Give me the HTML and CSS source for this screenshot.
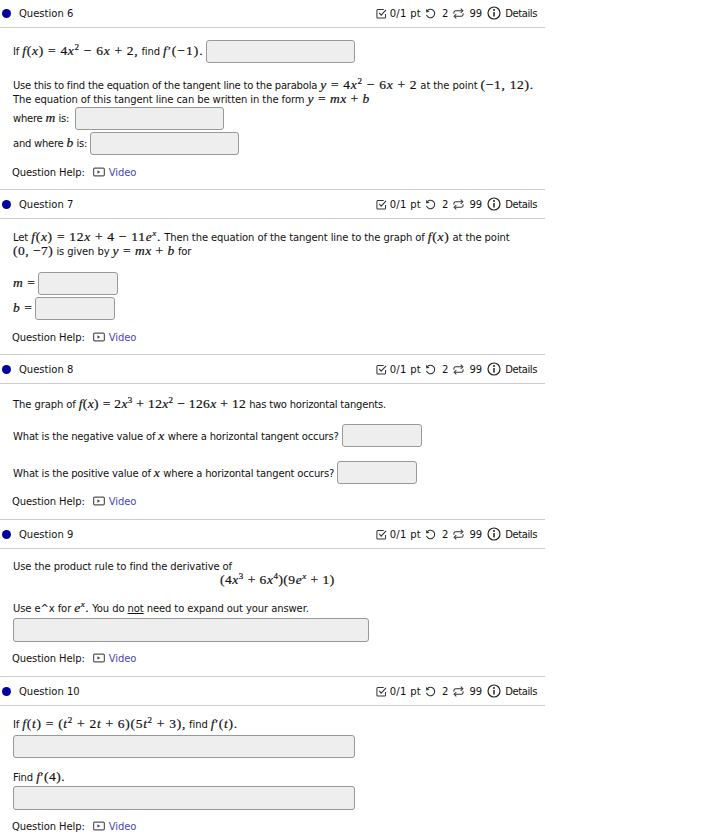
FILE: index.html
```html
<!DOCTYPE html>
<html lang="en">
  <head>
    <meta charset="utf-8" />
    <title>Assignment</title>
    <link rel="stylesheet" href="styles.css">
  </head>

  <body>
    <svg class="defs" width="0" height="0" aria-hidden="true">
      <symbol id="i-check" viewBox="0 0 12 12">
        <path d="M10.4 6.5V10a1 1 0 0 1-1 1H2a1 1 0 0 1-1-1V2.6a1 1 0 0 1 1-1h6.4" fill="none" stroke="#333" stroke-width="1.1"/>
        <path d="M3.5 5.4 5.6 7.8 11 2" fill="none" stroke="#333" stroke-width="1.2"/>
      </symbol>
      <symbol id="i-undo" viewBox="0 0 12 12">
        <path d="M2.6 2.8A4.6 4.6 0 1 1 1.6 7.5" fill="none" stroke="#333" stroke-width="1.2"/>
        <path d="M1 1.2 1.4 4.8 5 4.2Z" fill="#333"/>
      </symbol>
      <symbol id="i-retry" viewBox="0 0 12 12">
        <path d="M1 6.2V5a2 2 0 0 1 2-2h7M11 5.8V7a2 2 0 0 1-2 2H2" fill="none" stroke="#333" stroke-width="1.1"/>
        <path d="M8.4 .8 10.8 3 8.4 5.2M3.6 6.8 1.2 9 3.6 11.2" fill="none" stroke="#333" stroke-width="1.1"/>
      </symbol>
      <symbol id="i-info" viewBox="0 0 14 14">
        <circle cx="7" cy="7" r="6" fill="none" stroke="#222" stroke-width="1.2"/>
        <path d="M7 6v4.4" stroke="#222" stroke-width="1.5"/>
        <circle cx="7" cy="3.9" r="1" fill="#222"/>
      </symbol>
      <symbol id="i-video" viewBox="0 0 13 10">
        <rect x=".7" y=".7" width="11.6" height="8.6" rx="1.2" fill="none" stroke="#555" stroke-width="1.3"/>
        <path d="M4.8 3v4l3-2Z" fill="#444"/>
      </symbol>
    </svg>

    <main class="questions">

      <section class="question">
        <header class="q-head">
          <span class="q-dot"></span>
          <span class="q-name">Question 6</span>
          <div class="q-meta">
            <svg class="ic"><use href="#i-check"/></svg><span class="pts">0/1 pt</span>
            <svg class="ic"><use href="#i-undo"/></svg><span class="num">2</span>
            <svg class="ic"><use href="#i-retry"/></svg><span class="num">99</span>
            <svg class="ic-info"><use href="#i-info"/></svg><span class="details">Details</span>
          </div>
        </header>
        <div class="q-body q6">
          <div class="row"><span>If <span class="m loose"><i>f</i>(<i>x</i>) = 4<i>x</i><sup>2</sup> − 6<i>x</i> + 2,</span> find <span class="m looser"><i>f</i>′(−1).</span> </span><span class="box w149 q6-first"></span></div>
          <p class="para"><span class="narrow">Use this to find the equation of the tangent line to the parabola</span> <span class="m loose"><i>y</i> = 4<i>x</i><sup>2</sup> − 6<i>x</i> + 2</span> at the point <span class="m loose">(−1, 12).</span><br>
          The equation of this tangent line can be written in the form <span class="m"><i>y</i> = <i>mx</i> + <i>b</i></span></p>
          <div class="row tight"><span>where <span class="m"><i>m</i></span> is: </span><span class="box w149 q6-m"></span></div>
          <div class="row tight"><span>and where <span class="m"><i>b</i></span> is: </span><span class="box w149"></span></div>
          <p class="help">Question Help: <a class="video"><svg class="ic-video"><use href="#i-video"/></svg>Video</a></p>
        </div>
      </section>

      <section class="question">
        <header class="q-head">
          <span class="q-dot"></span>
          <span class="q-name">Question 7</span>
          <div class="q-meta">
            <svg class="ic"><use href="#i-check"/></svg><span class="pts">0/1 pt</span>
            <svg class="ic"><use href="#i-undo"/></svg><span class="num">2</span>
            <svg class="ic"><use href="#i-retry"/></svg><span class="num">99</span>
            <svg class="ic-info"><use href="#i-info"/></svg><span class="details">Details</span>
          </div>
        </header>
        <div class="q-body q7">
          <p class="para">Let <span class="m loose"><i>f</i>(<i>x</i>) = 12<i>x</i> + 4 − 11<i>e</i><sup><i>x</i></sup>.</span> Then the equation of the tangent line to the graph of <span class="m loose"><i>f</i>(<i>x</i>)</span> at the point<br>
          <span class="m">(0, −7)</span> is given by <span class="m"><i>y</i> = <i>mx</i> + <i>b</i></span> for</p>
          <div class="row first"><span><span class="m"><i>m</i> =</span></span><span class="box w80"></span></div>
          <div class="row tight"><span><span class="m"><i>b</i> =</span></span><span class="box w80"></span></div>
          <p class="help">Question Help: <a class="video"><svg class="ic-video"><use href="#i-video"/></svg>Video</a></p>
        </div>
      </section>

      <section class="question">
        <header class="q-head">
          <span class="q-dot"></span>
          <span class="q-name">Question 8</span>
          <div class="q-meta">
            <svg class="ic"><use href="#i-check"/></svg><span class="pts">0/1 pt</span>
            <svg class="ic"><use href="#i-undo"/></svg><span class="num">2</span>
            <svg class="ic"><use href="#i-retry"/></svg><span class="num">99</span>
            <svg class="ic-info"><use href="#i-info"/></svg><span class="details">Details</span>
          </div>
        </header>
        <div class="q-body q8">
          <p class="para">The graph of <span class="m snug"><i>f</i>(<i>x</i>) = 2<i>x</i><sup>3</sup> + 12<i>x</i><sup>2</sup> − 126<i>x</i> + 12</span> <span class="narrow">has two horizontal tangents.</span></p>
          <div class="row neg"><span>What is the negative value of <span class="m"><i>x</i></span> where a horizontal tangent occurs? </span><span class="box w80"></span></div>
          <div class="row pos"><span>What is the positive value of <span class="m"><i>x</i></span> where a horizontal tangent occurs? </span><span class="box w80"></span></div>
          <p class="help">Question Help: <a class="video"><svg class="ic-video"><use href="#i-video"/></svg>Video</a></p>
        </div>
      </section>

      <section class="question">
        <header class="q-head">
          <span class="q-dot"></span>
          <span class="q-name">Question 9</span>
          <div class="q-meta">
            <svg class="ic"><use href="#i-check"/></svg><span class="pts">0/1 pt</span>
            <svg class="ic"><use href="#i-undo"/></svg><span class="num">2</span>
            <svg class="ic"><use href="#i-retry"/></svg><span class="num">99</span>
            <svg class="ic-info"><use href="#i-info"/></svg><span class="details">Details</span>
          </div>
        </header>
        <div class="q-body q9">
          <p class="para">Use the product rule to find the derivative of</p>
          <p class="display m">(4<i>x</i><sup>3</sup> + 6<i>x</i><sup>4</sup>)(9<i>e</i><sup><i>x</i></sup> + 1)</p>
          <p class="para note">Use e^x for <span class="m"><i>e</i><sup><i>x</i></sup>.</span> You do <u>not</u> need to expand out your answer.</p>
          <div class="box wide356"></div>
          <p class="help">Question Help: <a class="video"><svg class="ic-video"><use href="#i-video"/></svg>Video</a></p>
        </div>
      </section>

      <section class="question last">
        <header class="q-head">
          <span class="q-dot"></span>
          <span class="q-name">Question 10</span>
          <div class="q-meta">
            <svg class="ic"><use href="#i-check"/></svg><span class="pts">0/1 pt</span>
            <svg class="ic"><use href="#i-undo"/></svg><span class="num">2</span>
            <svg class="ic"><use href="#i-retry"/></svg><span class="num">99</span>
            <svg class="ic-info"><use href="#i-info"/></svg><span class="details">Details</span>
          </div>
        </header>
        <div class="q-body q10">
          <p class="para">If <span class="m loose"><i>f</i>(<i>t</i>) = (<i>t</i><sup>2</sup> + 2<i>t</i> + 6)(5<i>t</i><sup>2</sup> + 3),</span> find <span class="m loose"><i>f</i>′(<i>t</i>).</span></p>
          <div class="box wide342"></div>
          <p class="para find">Find <span class="m"><i>f</i>′(4).</span></p>
          <div class="box wide342"></div>
          <p class="help">Question Help: <a class="video"><svg class="ic-video"><use href="#i-video"/></svg>Video</a></p>
        </div>
      </section>

    </main>
  </body>
</html>
```

FILE: styles.css
```css
html {
  font-family: "DejaVu Sans", sans-serif;
  font-size: 10px;
  color: #111;
}

body {
  margin: 0;
  background: #fff;
}

p {
  margin: 0;
}

.defs {
  display: block;
  height: 0;
}

.questions {
  width: 545px;
  margin-top: -1px;
}

.question {
  border-bottom: 1px solid #ccc;
}

.question.last {
  border-bottom: 0;
}

.q-head {
  display: flex;
  align-items: center;
  height: 28px;
  border-bottom: 1px solid #ccc;
}

.q-dot {
  width: 9px;
  height: 9px;
  margin-left: 2px;
  border-radius: 50%;
  background: #00009c;
}

.q-name {
  margin-left: 8px;
}

.q-meta {
  display: flex;
  align-items: center;
  margin-left: auto;
  margin-right: 8px;
}

.ic {
  width: 11px;
  height: 11px;
}

.ic-info {
  width: 14px;
  height: 14px;
  margin-right: 4px;
}

.pts {
  margin: 0 4px 0 3px;
  letter-spacing: 0.3px;
}

.num {
  margin: 0 5px;
}

.pts + .ic + .num {
  margin-left: 6px;
}

.details {
  letter-spacing: -0.4px;
}

.q-body {
  padding: 0 13px;
  letter-spacing: -0.1px;
  white-space: nowrap;
}

.m {
  font-family: "Liberation Serif", serif;
  font-size: 13.5px;
  font-weight: 500;
  line-height: 0;
  letter-spacing: 0.5px;
  -webkit-text-stroke: 0.2px #111;
}

.m.snug {
  letter-spacing: 0.35px;
}

.m.loose {
  letter-spacing: 0.7px;
}

.m.looser {
  letter-spacing: 1px;
}

.m sup {
  font-size: 9px;
  line-height: 0;
}

.narrow {
  letter-spacing: -0.22px;
}

.para {
  line-height: 14px;
}

.row {
  display: flex;
  align-items: center;
  height: 23px;
  white-space: pre;
}

.box {
  display: block;
  height: 23px;
  box-sizing: border-box;
  border: 1px solid #999;
  border-radius: 3px;
  background: #eee;
}

.w149 {
  width: 149px;
}

.w80 {
  width: 80px;
}

.wide356 {
  width: 356px;
}

.wide342 {
  width: 342px;
}

.help {
  display: flex;
  align-items: center;
  height: 14px;
  margin-left: -1px;
  white-space: pre;
}

.video {
  display: flex;
  align-items: center;
  color: #4848b8;
}

.ic-video {
  width: 12px;
  height: 10px;
  margin: 0 4px 0 5px;
}

.q6 {
  padding-top: 12px;
  padding-bottom: 10px;
}

.q6 .para {
  margin-top: 16px;
}

.q6 .row.tight {
  margin-top: 2px;
  letter-spacing: -0.25px;
}

.q6 .para + .row.tight {
  margin-top: 0;
}

.q6 .help {
  margin-top: 10px;
}

.q6-first {
  margin-left: -1px;
}

.q6-m {
  margin-left: 3px;
}

.q7 {
  padding-top: 12px;
  padding-bottom: 10px;
}

.q7 .first {
  margin-top: 13px;
}

.q7 .tight {
  margin-top: 2px;
}

.q7 .box {
  margin-left: 3px;
}

.q7 .help {
  margin-top: 10px;
}

.q8 {
  padding-top: 14px;
  padding-bottom: 11px;
}

.q8 .row {
  letter-spacing: -0.17px;
}

.q8 .row > span:first-child {
  padding-top: 2px;
}

.q8 .neg {
  margin-top: 12px;
}

.q8 .pos {
  margin-top: 14px;
}

.q8 .help {
  margin-top: 10px;
}

.q9 {
  padding-top: 11px;
  padding-bottom: 11px;
}

.display {
  line-height: 14px;
  margin-top: -1px;
  margin-left: 207px;
}

.note {
  margin-top: 15px;
}

.q9 .box {
  height: 24px;
  margin-top: 2px;
}

.q9 .help {
  margin-top: 9px;
}

.q10 {
  padding-top: 12px;
}

.q10 .box {
  margin-top: 3px;
}

.q10 .find {
  margin-top: 13px;
}

.q10 .find + .box {
  height: 24px;
  margin-top: 1px;
}

.q10 .help {
  margin-top: 9px;
}
```
